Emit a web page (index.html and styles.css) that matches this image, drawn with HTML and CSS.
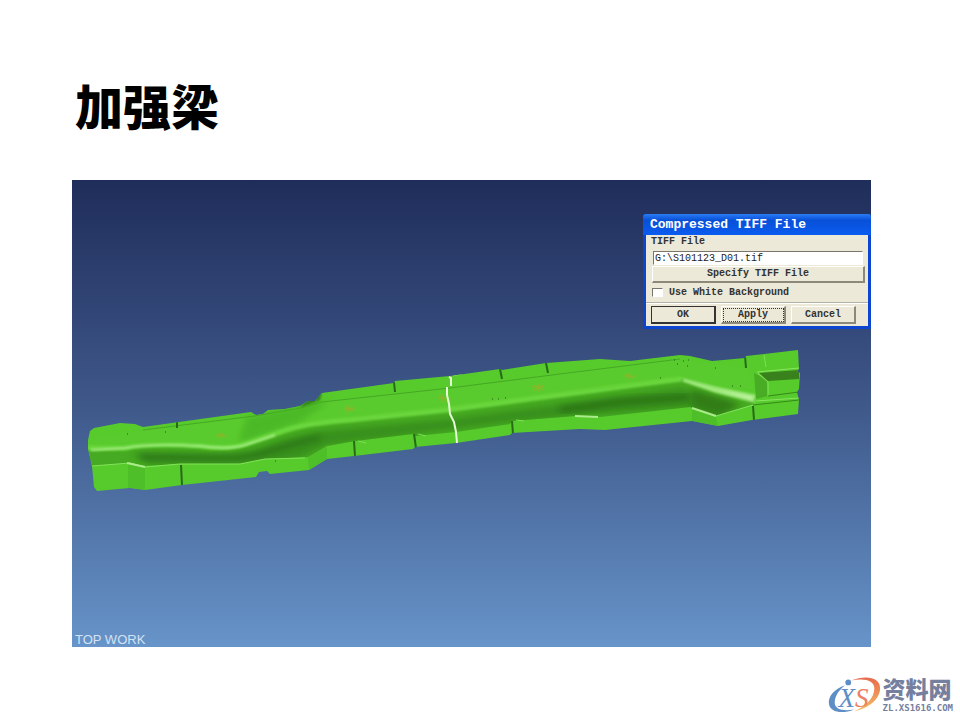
FILE: index.html
```html
<!DOCTYPE html>
<html lang="zh-CN">
<head>
    <meta charset="UTF-8">
    <meta name="viewport" content="width=device-width, initial-scale=1.0">
    <title>加强梁</title>
    <link rel="stylesheet" href="styles.css">
</head>
<body>
    <h1>加强梁</h1>
    <main class="viewer">
        <svg class="model" viewBox="72 180 799 467" aria-hidden="true">
            <defs>
                <filter id="soft1" x="-10%" y="-30%" width="120%" height="160%"><feGaussianBlur stdDeviation="1"/></filter>
                <filter id="soft3" x="-10%" y="-30%" width="120%" height="160%"><feGaussianBlur stdDeviation="3"/></filter>
                <clipPath id="outline">
                    <path d="M90 431L94 428L120 423L135 424L143 427L251 412L256 415L263 414L268 410L285 409L300 406L308 401L315 401L322 393L394 383L395 381L450 376L500 369L502 370L546 363L600 359L630 361L680 355L690 356L712 361L745 358L746 356L798 350L799 369L797 371L800 373L799 389L797 392L799 400L798 414L752 420L718 426L692 421L605 430L580 429L512 433L510 435L456 443L415 447L413 449L354 456L327 459L309 470L270 474L267 471L259 472L256 477L182 485L145 490L130 488L97 491L94 487L92 466L88 449L88 440Z"/>
                </clipPath>
                <clipPath id="wall">
                    <path d="M88 449L125 446L150 443L200 445L228 447L245 443L265 436L290 428L320 423L350 419L400 414L447 409L500 402L560 394L600 388L650 382L682 379L755 398L753 405L716 416L690 407L600 417L575 416L512 421L510 424L456 432L415 436L413 434L355 441L327 446L309 457L265 459L240 464L180 464L145 466L130 463L92 466Z"/>
                </clipPath>
            </defs>
            <g clip-path="url(#outline)">
                <rect x="80" y="340" width="730" height="160" fill="#57ca2c"/>
                <!-- top face -->
                <path d="M88 440L143 430L255 416L300 408L322 402L450 389L560 374L680 360L746 368L755 390L682 379L450 407L320 420L250 438L228 444L140 441L88 447Z" fill="#5acb2e"/>
                <path d="M247 417L308 403L330 401L300 422L250 440L238 441Z" fill="#4bb926" filter="url(#soft3)"/>
                <path d="M305 401L322 393L320 400L300 408Z" fill="#32831a" filter="url(#soft1)"/>
                <!-- side wall -->
                <g clip-path="url(#wall)">
                    <rect x="80" y="370" width="690" height="110" fill="#46aa22"/>
                    <path d="M130 453L225 455L250 452L285 439L320 431L450 419L560 404L682 388L735 404L716 420L690 407L575 416L510 422L415 434L327 445L300 458L240 464L150 464Z" fill="#37901b" filter="url(#soft3)"/>
                    <path d="M140 457L235 458L260 454L290 445L320 437" fill="none" stroke="#2b7417" stroke-width="5" filter="url(#soft3)"/>
                    <path d="M560 410L620 402L690 397" fill="none" stroke="#2b7417" stroke-width="7" filter="url(#soft3)"/>
                    <path d="M692 390L742 405L718 414L692 406Z" fill="#317d18" filter="url(#soft3)"/>
                </g>
                <path d="M88 448L125 448Q150 443 200 446Q228 450 245 444L290 429Q310 423 350 420L447 410L560 395L650 383L682 379" fill="none" stroke="#6ad73e" stroke-width="5" filter="url(#soft1)"/>
                <path d="M91 450L125 448Q150 443 200 446Q228 450 245 445L275 435" fill="none" stroke="#a8ee88" stroke-width="2" filter="url(#soft1)"/>
                <path d="M683 380L715 388L754 396L753 401L715 391Z" fill="#d0f7b6" stroke="#9ee97a" stroke-width="3" filter="url(#soft1)"/>
                <!-- lower flange -->
                <path d="M92 466L130 463L145 467L180 464L240 464L265 459L305 458M716 416L753 405" fill="none" stroke="#83e35b" stroke-width="1"/>
                <path d="M128 464L145 467L145 490L128 488ZM308 457L327 446L327 459L309 470ZM692 409L716 417L718 426L692 421Z" fill="#4ebe29"/>
                <path d="M127 463L145 467M575 416L598 417M692 408L716 416" fill="none" stroke="#a9ec89" stroke-width="2"/>
                <!-- right end -->
                <path d="M754 373L767 380L768 396L756 399Z" fill="#48ad24"/>
                <path d="M759 373L799 370L799 379L768 381Z" fill="#38811d"/>
                <path d="M758 373L768 382L768 396M757 372L799 368M756 401L799 398" fill="none" stroke="#8ae461"/>
                <path d="M753 405L799 400M768 396L799 392" fill="none" stroke="#35891b"/>
                <!-- seams -->
                <path d="M143 430L255 416L300 408L322 402L450 388L560 374L680 359" fill="none" stroke="#46a826"/>
                <path d="M177 422V428M181 465L182 485M394 382L395 392M500 369L502 379M546 363L548 373M354 441L355 456M414 434L416 448M512 421L513 434M745 356L746 368M753 406L754 420" fill="none" stroke="#276a18" stroke-width="2"/>
                <path d="M764 355L766 367M453 376L462 374M358 441L366 443M418 434L426 436M516 420L524 421" fill="none" stroke="#7edf57"/>
                <path d="M674 360h1M683 361h1M688 360h1M677 364h1M687 366h1M660 378h1M492 399h1M498 399h1M505 398h1M165 432h1M127 434h1M275 461h1M715 368h1M732 386h1M740 386h1" stroke="#1f5b12" stroke-width="1"/>
            </g>
            <!-- datum marks -->
            <path d="M216 436h11M221 433v5M218 434h6M344 409h12M349 405v8M345 406l9 5M345 412l9-6M438 398h10M443 394v9M439 395l8 6M532 387h12M538 384v8M533 385l10 5M533 391l10-6M623 376h13M629 373v7M625 374l9 5" fill="none" stroke="#9fae29" stroke-width="1" opacity="0.8"/>
            <path d="M449 377L451 378V386M447 387L447 395L449 404L450 414L454 422L456 432L457 443" fill="none" stroke="#e4fbd6" stroke-width="2"/>
        </svg>
        <form class="dialog">
            <h2>Compressed TIFF File</h2>
            <div class="fields">
                <label for="tiffFile">TIFF File</label>
                <input type="text" id="tiffFile" name="tiffFile" value="G:\S101123_D01.tif">
                <button type="button" class="specify">Specify TIFF File</button>
                <div class="check">
                    <input type="checkbox" id="whiteBg" name="whiteBg">
                    <label for="whiteBg">Use White Background</label>
                </div>
            </div>
            <div class="actions">
                <button type="button" class="ok">OK</button>
                <button type="button" class="apply">Apply</button>
                <button type="button">Cancel</button>
            </div>
        </form>
        <span class="caption">TOP WORK</span>
    </main>
    <footer>
        <svg class="logo" width="56" height="42" viewBox="0 0 58 42" aria-hidden="true">
            <defs>
                <linearGradient id="warm" x1="0" y1="0" x2="0" y2="1">
                    <stop offset="0" stop-color="#e66b50"/>
                    <stop offset="1" stop-color="#f7bd62"/>
                </linearGradient>
            </defs>
            <path d="M19 11C7 15 1 23 2 30C3 39 16 41 28 36C17 38 8 36 8 29C8 22 13 15 19 11Z" fill="#5d8ec5"/>
            <path d="M25 6C41 0 55 3 55 14C55 25 43 35 28 38C41 32 49 24 49 14C49 6 39 3 25 6Z" fill="url(#warm)"/>
            <circle cx="22" cy="8" r="3" fill="#5d8ec5"/>
            <text x="12" y="33" class="logo-x">X</text>
            <text x="29" y="33" class="logo-s">S</text>
        </svg>
        <div class="site">
            <strong>资料网</strong>
            <span>ZL.XS1616.COM</span>
        </div>
    </footer>
</body>
</html>
```
FILE: styles.css
```css
* {
    box-sizing: border-box;
}
body {
    margin: 0;
    background-color: #fff;
    font-family: "Liberation Sans", Arial, sans-serif;
}
h1 {
    margin: 0;
    padding: 80px 75px 52px;
    font-family: "Noto Sans CJK SC", sans-serif;
    font-size: 48px;
    line-height: 48px;
    font-weight: 900;
    color: #000;
}
.viewer {
    position: relative;
    margin: 0 89px 0 72px;
    background: linear-gradient(#1f2d5a, #405a8c 50%, #6794c9);
}
.model {
    display: block;
    width: 100%;
}
.dialog {
    position: absolute;
    top: 34px;
    right: 0;
    width: 228px;
    padding: 0 3px 3px;
    background-color: #0c46cf;
    border-radius: 3px 3px 0 0;
    font: bold 10px/12px "Liberation Mono", monospace;
    color: #333;
}
.dialog h2 {
    margin: 0 -3px;
    padding-left: 7px;
    border-radius: 3px 3px 0 0;
    font-size: 13px;
    line-height: 21px;
    color: #fff;
    background: linear-gradient(#2a7bf5, #0850d8 30%, #0a5cf0);
}
.fields {
    padding: 1px 5px 0;
    background-color: #ece9d8;
    border-bottom: 1px solid #b5b2a3;
}
.fields label {
    display: block;
}
.dialog input[type="text"] {
    display: block;
    width: 210px;
    height: 14px;
    margin: 3px 0 0 2px;
    padding: 0 1px;
    border: 1px solid #fff;
    border-top-color: #77756c;
    border-left-color: #77756c;
    background-color: #fff;
    font: 10px/12px "Liberation Mono", monospace;
    color: #222;
}
.dialog button {
    padding: 0;
    border: 1px solid #fff;
    border-right: 2px solid #8c897b;
    border-bottom: 2px solid #8c897b;
    background-color: #ece9d8;
    font: inherit;
    color: inherit;
}
.dialog .specify {
    display: block;
    width: 213px;
    height: 17px;
    margin: 1px 0 0 1px;
}
.check {
    display: flex;
    align-items: center;
    gap: 6px;
    height: 19px;
    padding-left: 1px;
}
.check input {
    appearance: none;
    width: 11px;
    height: 9px;
    margin: 0;
    border: 1px solid #fff;
    border-top-color: #77756c;
    border-left-color: #77756c;
    background-color: #fff;
}
.actions {
    display: flex;
    gap: 5px;
    padding: 2px 5px;
    background-color: #ece9d8;
    border-top: 1px solid #fff;
}
.actions button {
    width: 65px;
    height: 18px;
}
.dialog .ok {
    border: 1px solid #333;
    border-right-width: 2px;
    border-bottom-width: 2px;
}
.dialog .apply {
    outline: 1px dotted #333;
    outline-offset: -3px;
}
.caption {
    position: absolute;
    left: 3px;
    bottom: 1px;
    font-size: 13px;
    line-height: 12px;
    color: #d3e3f4;
}
footer {
    display: flex;
    justify-content: flex-end;
    padding: 27px 7px 0 0;
}
.site {
    display: flex;
    flex-direction: column;
    color: #75809f;
}
.site strong {
    font: 900 23px/29px "Noto Sans CJK SC", sans-serif;
}
.site span {
    font: bold 9px/10px "DejaVu Sans Mono", monospace;
}
.logo-x,
.logo-s {
    font: italic 28px "Liberation Serif", serif;
    fill: #5d8ec5;
}
.logo-s {
    fill: #ed8062;
}
```
